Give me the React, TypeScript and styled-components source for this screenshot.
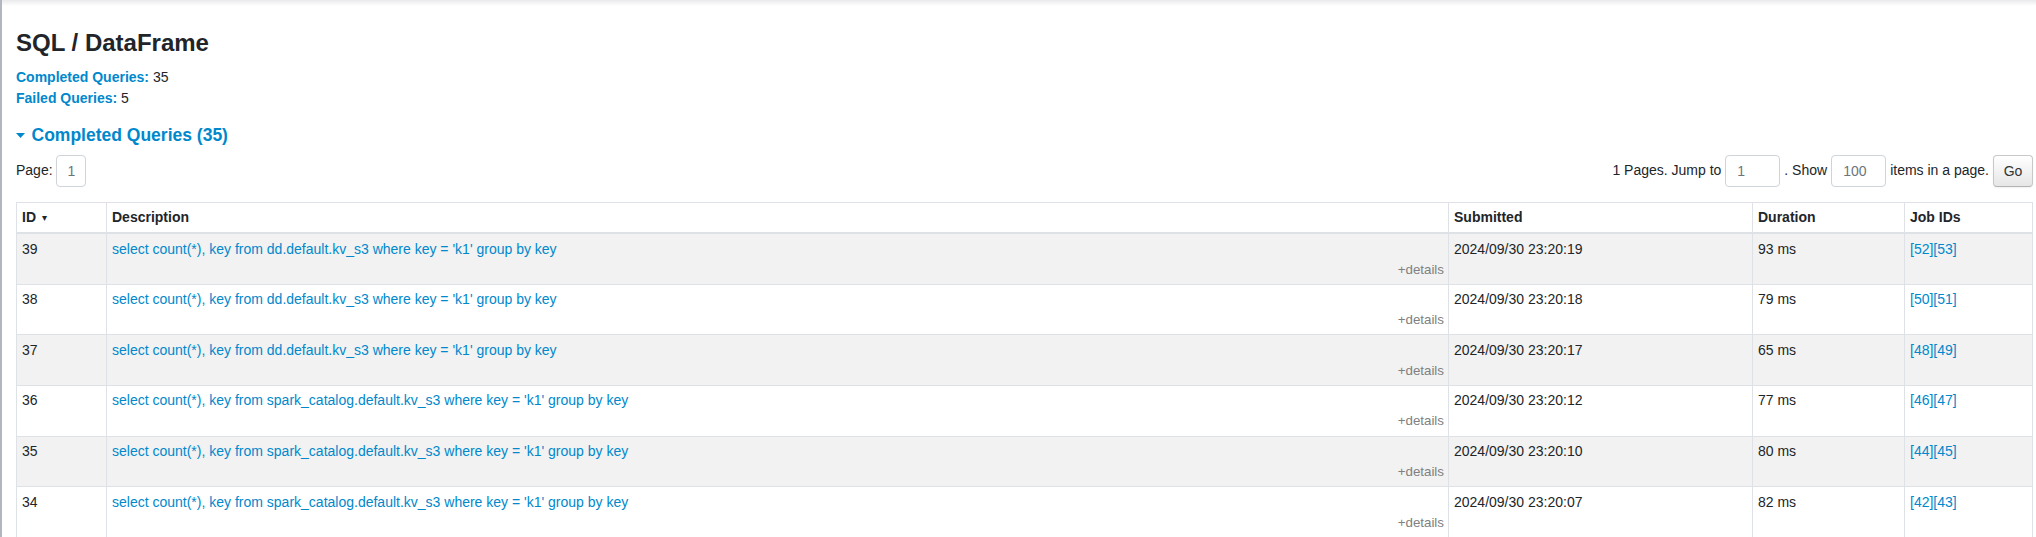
import React from "react";
import styled, { createGlobalStyle } from "styled-components";

const GlobalStyle = createGlobalStyle`
  html, body {
    margin: 0;
    padding: 0;
    background: #ffffff;
  }
  body {
    font-family: "Liberation Sans", Arial, sans-serif;
    font-size: 14px;
    line-height: 1.5;
    color: #212529;
  }
`;

const Frame = styled.div`
  min-height: 537px;
  border-left: 2px solid #b3b5bf;
  box-sizing: border-box;
`;

const TopShade = styled.div`
  height: 6px;
  background: linear-gradient(#e9e9ec, #ffffff);
`;

const Content = styled.div`
  padding: 0 3px 0 14px;
`;

const Title = styled.h3`
  margin: 23px 0 0;
  font-size: 24px;
  line-height: 1.2;
  font-weight: bold;
  color: #212529;
`;

const Summary = styled.ul`
  list-style: none;
  margin: 9.5px 0 0;
  padding: 0;
`;

const SummaryItem = styled.li`
  font-size: 14px;
  line-height: 21px;
`;

const SummaryLabel = styled.a`
  color: #0088cc;
  font-weight: bold;
  text-decoration: none;
`;

const SectionHeader = styled.h4`
  margin: 15.5px 0 0;
  display: flex;
  align-items: center;
  gap: 6.5px;
  font-size: 17.5px;
  line-height: 21px;
  font-weight: bold;
  color: #0088cc;
`;

const SectionLink = styled.a`
  color: #0088cc;
  text-decoration: none;
`;

const PagingRow = styled.div`
  margin-top: 9px;
  display: flex;
  justify-content: space-between;
  align-items: center;
  height: 32px;
`;

const PagingGroup = styled.div<{ $gap: number }>`
  display: flex;
  align-items: center;
  gap: ${(p) => p.$gap}px;
  white-space: nowrap;
`;

const NumInput = styled.input<{ $w: number }>`
  box-sizing: border-box;
  width: ${(p) => p.$w}px;
  height: 32px;
  padding: 0 0 0 11px;
  border: 1px solid #ced4da;
  border-radius: 4px;
  background: #ffffff;
  font-family: "Liberation Sans", Arial, sans-serif;
  font-size: 14px;
  color: #6c757d;
  outline: none;
`;

const GoButton = styled.button`
  box-sizing: border-box;
  width: 40px;
  height: 32px;
  padding: 0;
  border: 1px solid #c8c8c8;
  border-bottom-color: #b3b3b3;
  border-radius: 4px;
  background: linear-gradient(#ffffff, #e6e6e6);
  box-shadow: 0 1px 2px rgba(0, 0, 0, 0.06);
  font-family: "Liberation Sans", Arial, sans-serif;
  font-size: 14px;
  color: #333333;
`;

const Table = styled.table`
  margin-top: 15px;
  width: 100%;
  border-collapse: collapse;
  table-layout: fixed;
`;

const Th = styled.th`
  padding: 4.2px 5px;
  border: 1px solid #dee2e6;
  border-bottom: 2px solid #dee2e6;
  text-align: left;
  vertical-align: bottom;
  font-weight: bold;
  font-size: 14px;
  line-height: 21px;
  color: #212529;
  background: #ffffff;
`;

const SortMark = styled.span`
  font-family: "DejaVu Sans", sans-serif;
  font-size: 10px;
  font-weight: normal;
  margin-left: 6px;
  vertical-align: 1px;
`;

const Row = styled.tr<{ $striped: boolean }>`
  background: ${(p) => (p.$striped ? "#f2f2f2" : "#ffffff")};
`;

const Td = styled.td`
  padding: 4.33px 5px;
  border: 1px solid #dee2e6;
  vertical-align: top;
  font-size: 14px;
  line-height: 21px;
  color: #212529;
  overflow: hidden;
  white-space: nowrap;
`;

const DescLink = styled.a`
  display: block;
  color: #0088cc;
  text-decoration: none;
`;

const Details = styled.span`
  display: block;
  text-align: right;
  margin-right: -1px;
  font-size: 13.33px;
  line-height: 20px;
  color: #808080;
  cursor: pointer;
`;

const JobLink = styled.a`
  color: #0088cc;
  text-decoration: none;
`;

const Caret = () => (
  <svg width="9" height="5" viewBox="0 0 9 5" aria-hidden="true">
    <path d="M0 0 L9 0 L4.5 5 Z" fill="#0088cc" />
  </svg>
);

type Query = {
  id: number;
  desc: string;
  submitted: string;
  duration: string;
  jobs: number[];
};

const DD = "select count(*), key from dd.default.kv_s3 where key = 'k1' group by key";
const SC = "select count(*), key from spark_catalog.default.kv_s3 where key = 'k1' group by key";

const queries: Query[] = [
  { id: 39, desc: DD, submitted: "2024/09/30 23:20:19", duration: "93 ms", jobs: [52, 53] },
  { id: 38, desc: DD, submitted: "2024/09/30 23:20:18", duration: "79 ms", jobs: [50, 51] },
  { id: 37, desc: DD, submitted: "2024/09/30 23:20:17", duration: "65 ms", jobs: [48, 49] },
  { id: 36, desc: SC, submitted: "2024/09/30 23:20:12", duration: "77 ms", jobs: [46, 47] },
  { id: 35, desc: SC, submitted: "2024/09/30 23:20:10", duration: "80 ms", jobs: [44, 45] },
  { id: 34, desc: SC, submitted: "2024/09/30 23:20:07", duration: "82 ms", jobs: [42, 43] },
];

export default function App() {
  return (
    <>
      <GlobalStyle />
      <Frame>
        <TopShade />
        <Content>
          <Title>SQL / DataFrame</Title>
          <Summary>
            <SummaryItem>
              <SummaryLabel href="#completed">Completed Queries:</SummaryLabel> 35
            </SummaryItem>
            <SummaryItem>
              <SummaryLabel href="#failed">Failed Queries:</SummaryLabel> 5
            </SummaryItem>
          </Summary>
          <SectionHeader>
            <Caret />
            <SectionLink>Completed Queries (35)</SectionLink>
          </SectionHeader>
          <PagingRow>
            <PagingGroup $gap={3}>
              <span>Page:</span>
              <NumInput $w={30} value="1" readOnly />
            </PagingGroup>
            <PagingGroup $gap={4}>
              <span>1 Pages. Jump to</span>
              <NumInput $w={55} value="1" readOnly />
              <span>. Show</span>
              <NumInput $w={55} value="100" readOnly />
              <span>items in a page.</span>
              <GoButton>Go</GoButton>
            </PagingGroup>
          </PagingRow>
          <Table>
            <colgroup>
              <col style={{ width: 90 }} />
              <col style={{ width: 1342 }} />
              <col style={{ width: 304 }} />
              <col style={{ width: 152 }} />
              <col />
            </colgroup>
            <thead>
              <tr>
                <Th>
                  ID<SortMark>▾</SortMark>
                </Th>
                <Th>Description</Th>
                <Th>Submitted</Th>
                <Th>Duration</Th>
                <Th>Job IDs</Th>
              </tr>
            </thead>
            <tbody>
              {queries.map((q, i) => (
                <Row key={q.id} $striped={i % 2 === 0}>
                  <Td>{q.id}</Td>
                  <Td>
                    <DescLink>{q.desc}</DescLink>
                    <Details>+details</Details>
                  </Td>
                  <Td>{q.submitted}</Td>
                  <Td>{q.duration}</Td>
                  <Td>
                    {q.jobs.map((j) => (
                      <JobLink key={j}>[{j}]</JobLink>
                    ))}
                  </Td>
                </Row>
              ))}
            </tbody>
          </Table>
        </Content>
      </Frame>
    </>
  );
}
